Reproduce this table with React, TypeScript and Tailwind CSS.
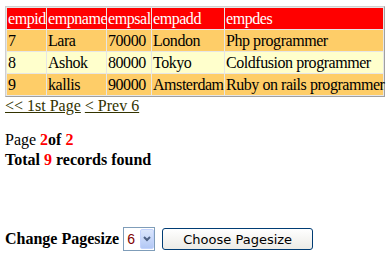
import React from 'react';

type Emp = { id: number; name: string; sal: number; add: string; des: string };

const rows: Emp[] = [
  { id: 7, name: 'Lara', sal: 70000, add: 'London', des: 'Php programmer' },
  { id: 8, name: 'Ashok', sal: 80000, add: 'Tokyo', des: 'Coldfusion programmer' },
  { id: 9, name: 'kallis', sal: 90000, add: 'Amsterdam', des: 'Ruby on rails programmer' },
];

const cols = ['empid', 'empname', 'empsal', 'empadd', 'empdes'];
const widths = ['w-[39px]', 'w-[59px]', 'w-[44px]', 'w-[72px]', 'w-[158px]'];

export default function App() {
  return (
    <div className="w-[391px] h-[268px] bg-white pl-[5px] pt-[6px] text-[16px] leading-[18px] text-black" style={{ fontFamily: '"Liberation Serif", "Times New Roman", serif' }}>
      <table className="table-fixed w-[379px] tracking-[-0.45px] border-separate border-spacing-[1px] bg-[#e6e6e6] border border-t-[#d0d0d0] border-l-[#d0d0d0] border-r-[#a0a0a0] border-b-[#a0a0a0]">
        <thead>
          <tr>
            {cols.map((c, i) => (
              <th key={c} className={`${widths[i]} bg-[#ff0000] text-white font-normal text-left px-[1px] h-[21px] whitespace-nowrap`}>
                {c}
              </th>
            ))}
          </tr>
        </thead>
        <tbody>
          {rows.map((r, i) => (
            <tr key={r.id} className={i % 2 === 0 ? 'bg-[#fecd68]' : 'bg-[#ffffcc]'}>
              <td className="px-[1px] h-[21px]">{r.id}</td>
              <td className="px-[1px] h-[21px]">{r.name}</td>
              <td className="px-[1px] h-[21px]">{r.sal}</td>
              <td className="px-[1px] h-[21px] whitespace-nowrap">{r.add}</td>
              <td className="px-[1px] h-[21px] whitespace-nowrap">{r.des}</td>
            </tr>
          ))}
        </tbody>
      </table>

      <div className="flex gap-[4px] text-[#333300]">
        <a href="#" className="underline">&lt;&lt; 1st Page</a>
        <a href="#" className="underline">&lt; Prev 6</a>
      </div>

      <div className="mt-[16px]">
        Page <b className="text-[#ff0000]">2</b><b>of </b><b className="text-[#ff0000]">2</b>
      </div>
      <div className="mt-[2px] font-bold">
        Total <span className="text-[#ff0000]">9</span> records found
      </div>

      <div className="mt-[58px] flex items-center">
        <b>Change Pagesize</b>
        <div className="ml-[4px] w-[32px] h-[24px] border border-[#7f9db9] flex items-center bg-white">
          <span className="pl-[3px] text-[#800000] text-[14px] w-[16px]" style={{ fontFamily: '"Liberation Sans", Arial, sans-serif' }}>6</span>
          <span className="w-[14px] h-[20px] rounded-[2px] bg-gradient-to-b from-[#dbe6fc] to-[#b3c8f5] border border-[#c3d3fd] flex items-center justify-center">
            <svg width="8" height="6" viewBox="0 0 8 6">
              <path d="M1 1 L4 4 L7 1" stroke="#4d6185" strokeWidth="2" fill="none" />
            </svg>
          </span>
        </div>
        <button
          className="ml-[7px] w-[151px] h-[22px] rounded-[3px] border border-[#003c74] bg-gradient-to-b from-white to-[#ecebe6] text-[13px] leading-[13px] text-black"
          style={{ fontFamily: '"DejaVu Sans", Tahoma, sans-serif' }}
        >
          Choose Pagesize
        </button>
      </div>
    </div>
  );
}
